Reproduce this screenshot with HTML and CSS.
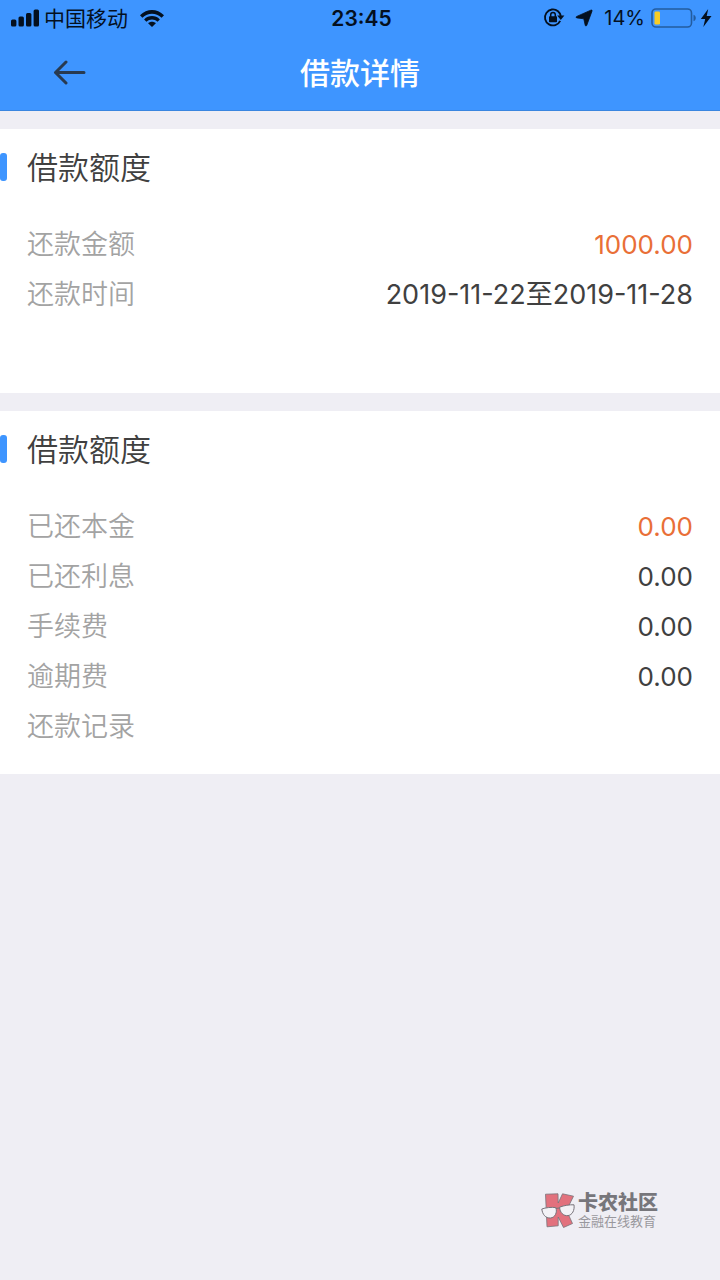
FILE: index.html
```
<!DOCTYPE html>
<html lang="zh-CN">
<head>
    <meta charset="UTF-8">
    <meta name="viewport" content="width=device-width, initial-scale=1.0">
    <title>借款详情</title>
    <link rel="stylesheet" href="styles.css">
</head>
<body>
    <header class="header">
        <div class="status-bar">
            <div class="status-left">
                <svg class="signal" width="28" height="18" viewBox="0 0 28 18">
                    <rect x="0" y="10.5" width="5.4" height="7" rx="1.5"/>
                    <rect x="7.5" y="7.5" width="5.4" height="10" rx="1.5"/>
                    <rect x="15" y="4" width="5.4" height="13.5" rx="1.5"/>
                    <rect x="22.6" y=".5" width="5.4" height="17" rx="1.5"/>
                </svg>
                <span class="carrier">中国移动</span>
                <svg class="wifi" width="26" height="18" viewBox="0 0 26 18">
                    <path d="M1 6.2C8 -.8 18 -.8 25 6.2L22.6 8.7C17 3.3 9 3.3 3.4 8.7Z"/>
                    <path d="M5.1 10.4C9.6 6 16.4 6 20.9 10.4L18.5 12.8C15.3 9.8 10.7 9.8 7.5 12.8Z"/>
                    <path d="M9.1 14.3C11.3 12.3 14.7 12.3 16.9 14.3L13 18Z"/>
                </svg>
            </div>
            <span class="clock">23:45</span>
            <div class="status-right">
                <svg width="22" height="20" viewBox="0 0 22 20">
                    <path d="M15 3.2A8 8 0 1 0 17.2 12.8M15 3.2A8 8 0 0 1 17.8 8" fill="none" stroke="#04101f" stroke-width="1.8"/>
                    <path d="M14.2 7.6H21.4L17.8 12Z"/>
                    <rect x="6" y="8.2" width="8" height="6" rx=".8"/>
                    <path d="M7.7 9V6.8a2.3 2.3 0 0 1 4.6 0V9" fill="none" stroke="#04101f" stroke-width="1.5"/>
                </svg>
                <svg class="location" width="18" height="18" viewBox="0 0 18 18">
                    <path d="M15.8 1.2C17 .8 17.4 1.3 16.9 2.4L11.8 16.2C11.4 17.3 10.4 17.2 10.2 16.2L8.8 9.8L2 8.9C.8 8.7 .8 7.8 1.8 7.4Z" stroke="#04101f" stroke-width=".8"/>
                </svg>
                <span class="percent">14%</span>
                <svg class="battery" width="46" height="20" viewBox="0 0 46 20">
                    <rect x="1" y="1" width="39.5" height="18" rx="4" fill="none" stroke="#235c9f" stroke-width="1.6"/>
                    <rect x="3.5" y="3.5" width="5.5" height="13" rx="1.3" fill="#f7cc24"/>
                    <path d="M42.5 6.8C45.5 7.6 45.5 12.4 42.5 13.2Z" fill="#235c9f"/>
                </svg>
                <svg class="bolt" width="12" height="18" viewBox="0 0 12 18">
                    <path d="M8.2 0L.8 10H5.2L3.3 18L11.5 7H6.7Z"/>
                </svg>
            </div>
        </div>
        <div class="nav">
            <button type="button" class="back" aria-label="返回">
                <svg width="34" height="26" viewBox="0 0 34 26">
                    <path d="M32 12.5H3.5M14 2L3.5 12.5L14 23" fill="none" stroke="#283a50" stroke-width="3" stroke-linecap="round" stroke-linejoin="round"/>
                </svg>
            </button>
            <h1>借款详情</h1>
        </div>
    </header>

    <main>
        <section class="card card-amount">
            <h2>借款额度</h2>
            <dl>
                <div class="row"><dt>还款金额</dt><dd class="amount orange">1000.00</dd></div>
                <div class="row"><dt>还款时间</dt><dd>2019-11-22至2019-11-28</dd></div>
            </dl>
        </section>

        <section class="card">
            <h2>借款额度</h2>
            <dl>
                <div class="row"><dt>已还本金</dt><dd class="amount orange">0.00</dd></div>
                <div class="row"><dt>已还利息</dt><dd class="amount">0.00</dd></div>
                <div class="row"><dt>手续费</dt><dd class="amount">0.00</dd></div>
                <div class="row"><dt>逾期费</dt><dd class="amount">0.00</dd></div>
                <div class="row"><dt>还款记录</dt><dd></dd></div>
            </dl>
        </section>
    </main>

    <div class="watermark">
        <svg width="35" height="37" viewBox="0 0 35 37">
            <path d="M4.5 2.2L17 1.8L17.2 11L21.5 1.8L32.5 4.2L25.5 18.5L31.5 31.5L22.5 35.5L17.2 25V33.8L6 34.8Z" fill="#e2717d" stroke="#77737a" stroke-width=".8" stroke-linejoin="round"/>
            <g fill="#f3f2f6" stroke="#77737a" stroke-linejoin="round">
                <path d="M.8 17C4.5 15.6 10.5 15 14.8 15.6C16.6 20.4 14 25.6 9.5 26C4.6 26.4 1.4 22.4 .8 17Z"/>
                <path d="M18.6 15.2C23 13.4 28.6 12.6 33 12.8C33.8 18.4 31.2 23 27 23.6C22.6 24.2 18.8 20.6 18.6 15.2Z"/>
                <path d="M14.8 16.4L18.6 16" fill="none"/>
            </g>
        </svg>
        <div class="watermark-text">
            <strong>卡农社区</strong>
            <span>金融在线教育</span>
        </div>
    </div>
</body>
</html>
```

FILE: styles.css
```
* {
    margin: 0;
    padding: 0;
    box-sizing: border-box;
}

body {
    font-family: Inter, "Noto Sans CJK SC", sans-serif;
    background-color: #efeef4;
    color: #404040;
    min-height: 100vh;
    display: flex;
    flex-direction: column;
}

/* Cabecera */
.header {
    background-color: #3e95ff;
    border-bottom: 1px solid #3a86e0;
}

.status-bar {
    display: grid;
    grid-template-columns: 1fr auto 1fr;
    align-items: center;
    height: 36px;
    padding: 0 8px 0 11px;
    font-size: 20px;
    line-height: 25px;
    color: #04101f;
    fill: #04101f;
}

.status-left,
.status-right {
    display: flex;
    align-items: center;
}

.status-right {
    justify-content: flex-end;
}

.carrier {
    font-size: 21px;
    margin: 0 11px 0 5px;
}

.clock {
    font-size: 21px;
    font-weight: 600;
}

.location {
    margin: 0 11px 0 10px;
}

.battery {
    margin: 0 3px 0 6px;
}

.nav {
    display: grid;
    grid-template-columns: 1fr auto 1fr;
    align-items: center;
    height: 74px;
    padding: 0 52px;
}

.back {
    justify-self: start;
    display: flex;
    background: none;
    border: none;
    cursor: pointer;
}

h1 {
    font-size: 30px;
    font-weight: 500;
    line-height: 40px;
    color: #fff;
}

/* Tarjetas */
.card {
    margin-top: 18px;
    padding-bottom: 22px;
    background-color: #fff;
}

.card-amount {
    padding-bottom: 73px;
}

h2 {
    display: flex;
    align-items: center;
    gap: 20px;
    height: 76px;
    margin-bottom: 15px;
    font-size: 31px;
    font-weight: 350;
    line-height: 41px;
}

h2::before {
    content: "";
    width: 7px;
    height: 28px;
    border-radius: 3px;
    background-color: #3e95ff;
}

.row {
    display: flex;
    justify-content: space-between;
    align-items: center;
    height: 50px;
    padding: 0 27px;
    font-size: 27px;
    line-height: 40px;
}

dt {
    font-weight: 350;
    color: #a3a3a3;
}

.amount {
    font-size: 26px;
}

.orange {
    color: #e96f37;
}

/* Marca de agua */
.watermark {
    display: flex;
    align-items: center;
    gap: 2px;
    margin: auto 62px 51px auto;
    color: #77767b;
}

.watermark-text {
    display: flex;
    flex-direction: column;
}

.watermark strong {
    font-size: 20px;
    font-weight: 900;
    line-height: 21px;
}

.watermark span {
    font-size: 13px;
    line-height: 14px;
    color: #99989d;
}
```
